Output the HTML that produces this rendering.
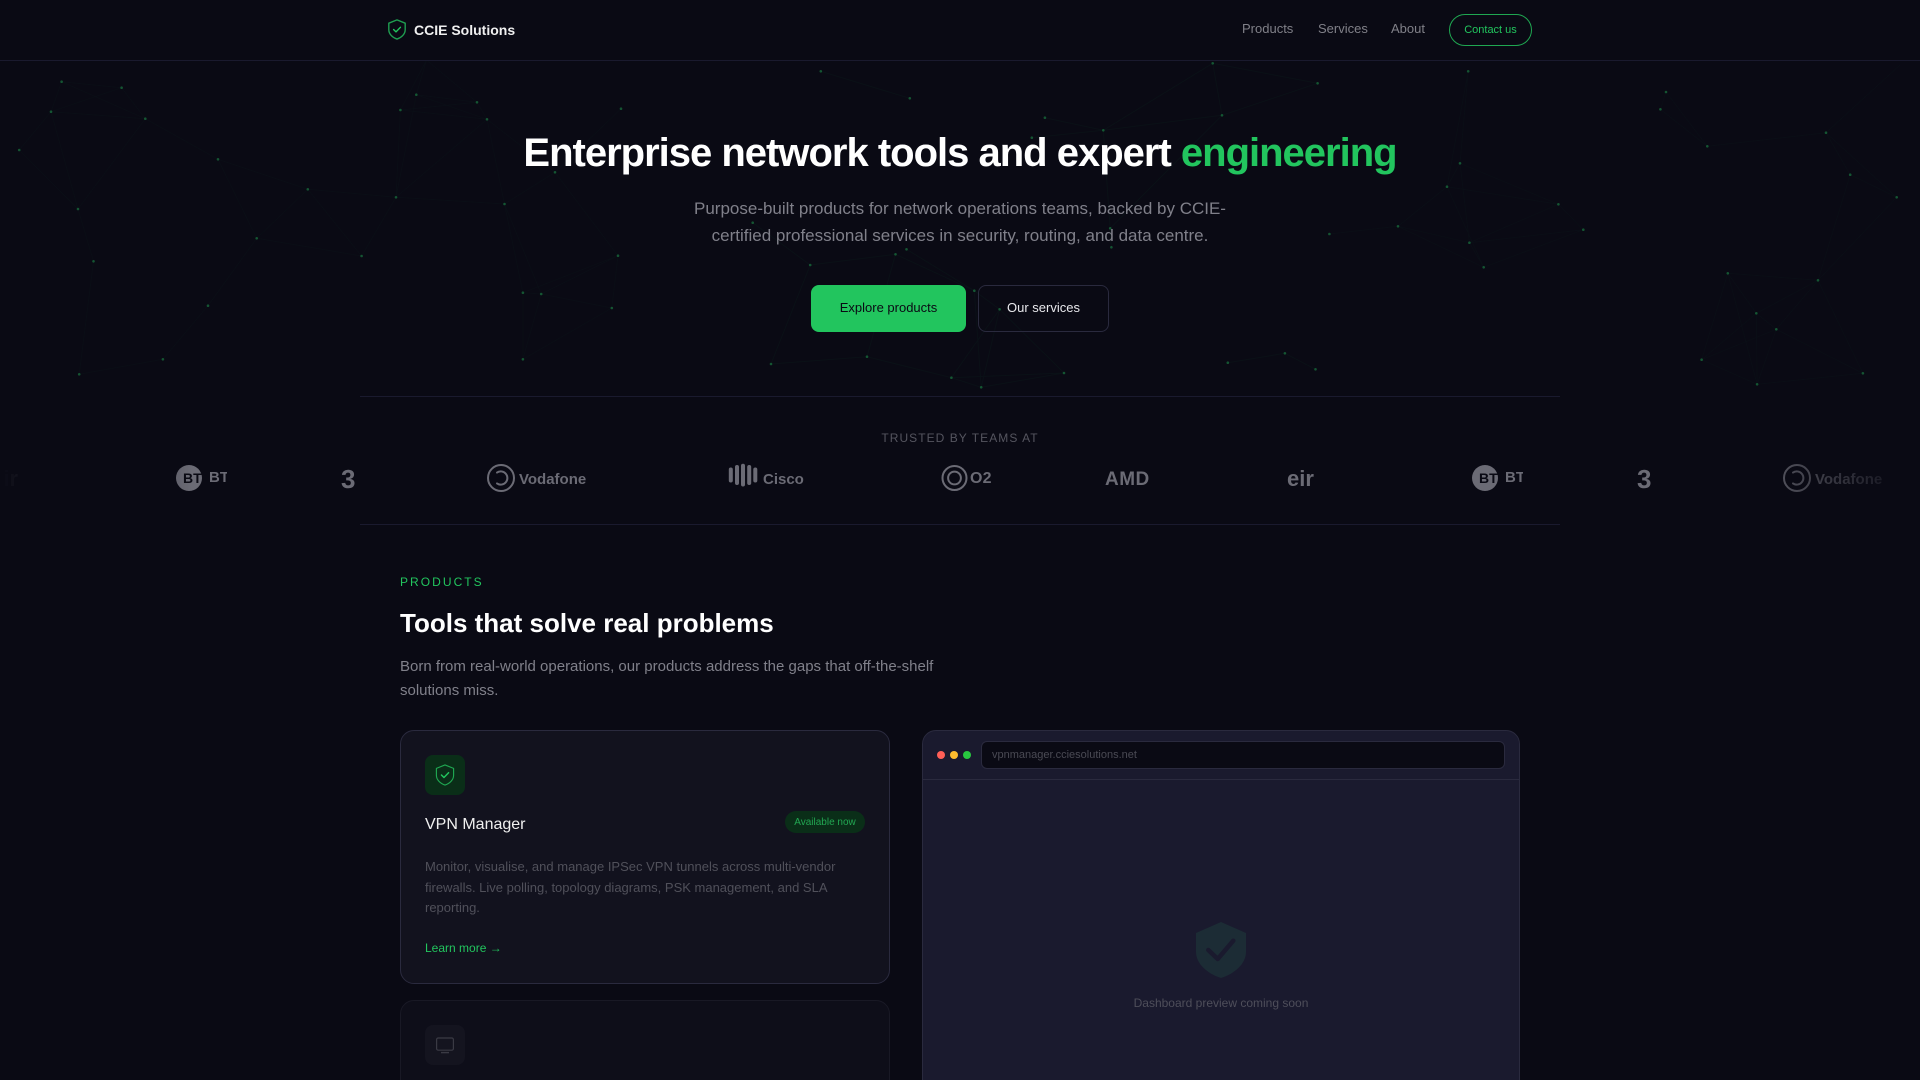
<!DOCTYPE html>
<html lang="en">
<head>
<meta charset="utf-8">
<title>CCIE Solutions</title>
<style>
html,body{margin:0;padding:0;width:1920px;height:1080px;overflow:hidden;background:#0a0a14}
body{position:relative;font-family:"Liberation Sans",sans-serif;color:#fff}
.a{position:absolute;white-space:nowrap}
#net{position:absolute;left:0;top:61px;width:1920px;height:340px}
.marq{position:absolute;left:0;top:450px;width:1920px;height:60px;
 -webkit-mask-image:linear-gradient(90deg,transparent 0,#000 192px,#000 1728px,transparent 1920px);
 mask-image:linear-gradient(90deg,transparent 0,#000 192px,#000 1728px,transparent 1920px)}
.lg{position:absolute;white-space:nowrap;color:#6b6b75;font-weight:700;line-height:20px}
.btc{position:absolute;width:26px;height:20px;overflow:hidden;color:#0a0a14;font-size:14px;font-weight:700;line-height:20px;padding-left:7px;box-sizing:border-box;white-space:nowrap}
.btt{position:absolute;width:18px;overflow:hidden;color:#6b6b75;font-size:15px;font-weight:700;line-height:20px;white-space:nowrap}
</style>
</head>
<body>
<svg id="net" viewBox="0 61 1920 340" xmlns="http://www.w3.org/2000/svg">
<path fill="none" stroke="#22c55e" stroke-opacity=".028" stroke-width="1" d="M61.6 81.7L121.6 87.7M61.6 81.7L145.3 118.7M61.6 81.7L51 111.7M121.6 87.7L51 111.7M51 111.7L145.3 118.7M121.6 87.7L145.3 118.7M51 111.7L19.2 150M145.3 118.7L218 159.3M51 111.7L78 209M145.3 118.7L78 209M19.2 150L78 209M78 209L93.5 261.3M93.5 261.3L79.2 374.3M79.2 374.3L162.9 359.3M162.9 359.3L208 305.7M208 305.7L256.7 238.3M218 159.3L307.8 189.3M218 159.3L256.7 238.3M307.8 189.3L256.7 238.3M307.8 189.3L361.6 256M256.7 238.3L361.6 256M307.8 189.3L396 197.3M396 197.3L361.6 256M396 197.3L504.5 204M396 197.3L400.4 110M396 197.3L416.3 94.7M396 197.3L487 119.3M416.3 94.7L477 102.3M416.3 94.7L487 119.3M400.4 110L477 102.3M400.4 110L487 119.3M477 102.3L487 119.3M426.5 60L416.3 94.7M426.5 60L477 102.3M426.5 60L400.4 110M487 119.3L504.5 204M487 119.3L555 172.3M504.5 204L555 172.3M555 172.3L618 255.7M504.5 204L522.9 292.7M504.5 204L541.2 294M522.9 292.7L541.2 294M541.2 294L618 255.7M522.9 292.7L618 255.7M541.2 294L611.8 308M618 255.7L611.8 308M522.9 292.7L522.9 359.3M541.2 294L522.9 359.3M611.8 308L522.9 359.3M621 108.7L555 172.3"/>
<path fill="none" stroke="#22c55e" stroke-opacity=".04" stroke-width="1" d="M820.8 71.3L909.8 98.3M1044.9 117.7L1103.3 130.3M1031.8 137.7L1103.3 130.3M1103.3 130.3L1222 115.3M1103.3 130.3L1212.7 63.3M1212.7 63.3L1222 115.3M1103.3 130.3L1110.2 228.3M1103.3 130.3L1111.4 247.3M1222 115.3L1110.2 228.3M1110.2 228.3L1111.4 247.3M752.7 222.7L810.2 265M895.5 254.3L810.2 265M906.5 249.3L974.3 290.7M895.5 254.3L974.3 290.7M974.3 290.7L999.6 309.3M810.2 265L771 364M771 364L867 356.7M867 356.7L951.4 377.7M951.4 377.7L981.2 387.3M951.4 377.7L1064 373M981.2 387.3L1064 373M999.6 309.3L951.4 377.7M999.6 309.3L981.2 387.3M974.3 290.7L981.2 387.3M895.5 254.3L867 356.7M1064 373L999.6 309.3M1227.8 362.7L1284.9 353.3M1284.9 353.3L1315.5 369.3M1222 115.3L1317.6 83.3M1212.7 63.3L1317.6 83.3"/>
<path fill="none" stroke="#22c55e" stroke-opacity=".028" stroke-width="1" d="M1468.2 71.3L1460 163.3M1468.2 71.3L1447 186.7M1460 163.3L1447 186.7M1460 163.3L1469.4 242.7M1460 163.3L1558.4 204.3M1447 186.7L1558.4 204.3M1447 186.7L1398 226.3M1447 186.7L1483.7 267.3M1398 226.3L1329.4 234M1398 226.3L1469.4 242.7M1398 226.3L1483.7 267.3M1469.4 242.7L1558.4 204.3M1469.4 242.7L1583.3 229.7M1469.4 242.7L1483.7 267.3M1483.7 267.3L1583.3 229.7M1558.4 204.3L1583.3 229.7M1666 92L1660.4 109.3M1666 92L1707.3 146.3M1660.4 109.3L1707.3 146.3M1707.3 146.3L1826 132.7M1826 132.7L1850.2 174.7M1826 132.7L1896.7 197.3M1850.2 174.7L1896.7 197.3M1850.2 174.7L1818 280.3M1896.7 197.3L1818 280.3M1826 132.7L1900 65M1727.8 273.3L1818 280.3M1727.8 273.3L1756.3 313.3M1727.8 273.3L1701.6 359.7M1727.8 273.3L1757.1 384.3M1818 280.3L1756.3 313.3M1818 280.3L1776.3 329.3M1818 280.3L1862.9 373.3M1756.3 313.3L1776.3 329.3M1756.3 313.3L1701.6 359.7M1756.3 313.3L1757.1 384.3M1776.3 329.3L1701.6 359.7M1776.3 329.3L1757.1 384.3M1776.3 329.3L1862.9 373.3M1701.6 359.7L1757.1 384.3M1757.1 384.3L1862.9 373.3"/>
<path fill="none" stroke="#1f9d50" stroke-opacity=".5" stroke-width="2.6" stroke-linecap="round" d="M61.6 81.7h.01M121.6 87.7h.01M51 111.7h.01M145.3 118.7h.01M19.2 150h.01M218 159.3h.01M307.8 189.3h.01M396 197.3h.01M78 209h.01M256.7 238.3h.01M361.6 256h.01M93.5 261.3h.01M208 305.7h.01M162.9 359.3h.01M79.2 374.3h.01M416.3 94.7h.01M477 102.3h.01M400.4 110h.01M487 119.3h.01M555 172.3h.01M504.5 204h.01M621 108.7h.01M618 255.7h.01M522.9 292.7h.01M541.2 294h.01M611.8 308h.01M522.9 359.3h.01M820.8 71.3h.01M909.8 98.3h.01M1044.9 117.7h.01M1103.3 130.3h.01M1031.8 137.7h.01M1212.7 63.3h.01M1222 115.3h.01M752.7 222.7h.01M1110.2 228.3h.01M1111.4 247.3h.01M895.5 254.3h.01M906.5 249.3h.01M810.2 265h.01M974.3 290.7h.01M999.6 309.3h.01M771 364h.01M867 356.7h.01M951.4 377.7h.01M981.2 387.3h.01M1064 373h.01M1227.8 362.7h.01M1317.6 83.3h.01M1468.2 71.3h.01M1460 163.3h.01M1447 186.7h.01M1558.4 204.3h.01M1398 226.3h.01M1329.4 234h.01M1583.3 229.7h.01M1469.4 242.7h.01M1483.7 267.3h.01M1284.9 353.3h.01M1315.5 369.3h.01M1666 92h.01M1660.4 109.3h.01M1707.3 146.3h.01M1826 132.7h.01M1850.2 174.7h.01M1896.7 197.3h.01M1727.8 273.3h.01M1818 280.3h.01M1756.3 313.3h.01M1776.3 329.3h.01M1701.6 359.7h.01M1862.9 373.3h.01M1757.1 384.3h.01"/>
</svg>

<!-- Nav -->
<div class="a" style="left:0;top:60px;width:1920px;height:1px;background:#1a1a2e"></div>
<svg class="a" style="left:387px;top:19px" width="20" height="21" viewBox="0 0 20 21" fill="none" stroke="#1f9d50" stroke-width="1.4" stroke-linejoin="round" stroke-linecap="round"><path d="M10 .9L18.2 4.2V10.8C18.2 15 14.6 18.6 10 20.1 5.4 18.6 1.8 15 1.8 10.8V4.2Z"/><path d="M6.6 10.5l2.4 2.4 4.4-4.6" stroke="#22c55e"/></svg>
<div class="a" style="left:414px;top:20px;font-size:14px;font-weight:700;line-height:20px;color:#f0f0f0">CCIE Solutions</div>
<div class="a" style="left:1242px;top:19px;font-size:13px;line-height:20px;color:#808088">Products</div>
<div class="a" style="left:1318px;top:19px;font-size:13px;line-height:20px;color:#808088">Services</div>
<div class="a" style="left:1391px;top:19px;font-size:13px;line-height:20px;color:#808088">About</div>
<div class="a" style="left:1449px;top:14px;width:83px;height:32px;box-sizing:border-box;border:1px solid #1fa751;border-radius:16px;font-size:11px;line-height:30px;text-align:center;color:#22c55e">Contact us</div>

<!-- Hero -->
<div class="a" style="left:0;width:1920px;top:127px;text-align:center;font-size:40px;font-weight:700;letter-spacing:-1px;line-height:52px;color:#fff">Enterprise network tools and expert <span style="color:#22c55e">engineering</span></div>
<div class="a" style="left:0;width:1920px;top:195px;text-align:center;font-size:17px;line-height:27px;color:#80808a">Purpose-built products for network operations teams, backed by CCIE-<br>certified professional services in security, routing, and data centre.</div>
<div class="a" style="left:811px;top:285px;width:155px;height:47px;border-radius:8px;background:#22c55e;color:#0a0a14;font-size:13px;line-height:46px;text-align:center">Explore products</div>
<div class="a" style="left:978px;top:285px;width:131px;height:47px;box-sizing:border-box;border:1px solid #2a2a3e;border-radius:8px;color:#e8e8ec;font-size:13px;line-height:44px;text-align:center">Our services</div>

<div class="a" style="left:360px;top:396px;width:1200px;height:1px;background:#1a1a2e"></div>
<div class="a" style="left:360px;top:524px;width:1200px;height:1px;background:#1a1a2e"></div>

<!-- Trusted -->
<div class="a" style="left:0;width:1920px;top:430px;text-align:center;font-size:12px;line-height:16px;letter-spacing:1.05px;color:#55555f">TRUSTED BY TEAMS AT</div>
<div class="marq">
 <div class="lg" style="left:-9px;top:18px;font-size:22px;line-height:22px">eir</div>
 <svg class="a" style="left:176px;top:15px" width="26" height="26"><circle cx="13" cy="13" r="13" fill="#6b6b75"/></svg>
 <div class="btc" style="left:176px;top:18px">BT</div>
 <div class="btt" style="left:209px;top:18px">BT</div>
 <div class="lg" style="left:341px;top:14px;font-size:26px;line-height:30px">3</div>
 <svg class="a" style="left:487px;top:14px" width="28" height="28" fill="none" stroke="#6b6b75" stroke-width="2"><circle cx="14" cy="14" r="13"/><path d="M10 8.6A6.6 6.6 0 1 1 10 19.4" stroke-linecap="round"/></svg>
 <div class="lg" style="left:519px;top:20px;font-size:15px">Vodafone</div>
 <svg class="a" style="left:728px;top:13px" width="30" height="24" stroke="#6b6b75" stroke-width="4" stroke-linecap="round"><path d="M2.8 6.5V17.5M9 4V20M15 2.8V21.5M21.2 4V20M27.3 6.5V17.5"/></svg>
 <div class="lg" style="left:763px;top:20px;font-size:15px">Cisco</div>
 <svg class="a" style="left:941px;top:15px" width="27" height="26" fill="none" stroke="#6b6b75" stroke-width="2"><circle cx="13.5" cy="13" r="12"/><circle cx="13.5" cy="13" r="6.4"/></svg>
 <div class="lg" style="left:970px;top:19px;font-size:16px;letter-spacing:.2px">O2</div>
 <div class="lg" style="left:1105px;top:20px;font-size:19px;letter-spacing:.5px">AMD</div>
 <div class="lg" style="left:1287px;top:18px;font-size:22px;line-height:22px">eir</div>
 <svg class="a" style="left:1472px;top:15px" width="26" height="26"><circle cx="13" cy="13" r="13" fill="#6b6b75"/></svg>
 <div class="btc" style="left:1472px;top:18px">BT</div>
 <div class="btt" style="left:1505px;top:18px">BT</div>
 <div class="lg" style="left:1637px;top:14px;font-size:26px;line-height:30px">3</div>
 <svg class="a" style="left:1783px;top:14px" width="28" height="28" fill="none" stroke="#6b6b75" stroke-width="2"><circle cx="14" cy="14" r="13"/><path d="M10 8.6A6.6 6.6 0 1 1 10 19.4" stroke-linecap="round"/></svg>
 <div class="lg" style="left:1815px;top:20px;font-size:15px">Vodafone</div>
</div>

<!-- Products -->
<div class="a" style="left:400px;top:574px;font-size:12px;line-height:16px;letter-spacing:2.05px;color:#22c55e">PRODUCTS</div>
<div class="a" style="left:400px;top:606px;font-size:26px;font-weight:700;line-height:34px;color:#fff">Tools that solve real problems</div>
<div class="a" style="left:400px;top:655px;font-size:15px;line-height:24px;color:#80808a">Born from real-world operations, our products address the gaps that off-the-shelf<br>solutions miss.</div>

<!-- Card 1 -->
<div class="a" style="left:400px;top:730px;width:490px;height:254px;box-sizing:border-box;border:1px solid #2a2a3e;border-radius:14px;background:#12121e"></div>
<div class="a" style="left:425px;top:755px;width:40px;height:40px;border-radius:8px;background:#0a2e18"></div>
<svg class="a" style="left:434px;top:764px" width="22" height="22" viewBox="0 0 20 21" fill="none" stroke="#22c55e" stroke-width="1.1" stroke-linejoin="round" stroke-linecap="round"><path d="M10 .9L18.2 4.2V10.8C18.2 15 14.6 18.6 10 20.1 5.4 18.6 1.8 15 1.8 10.8V4.2Z" stroke="#1fa751"/><path d="M6.6 10.5l2.4 2.4 4.4-4.6" stroke-width="1.4"/></svg>
<div class="a" style="left:425px;top:814px;font-size:16px;line-height:22px;color:#f0f0f0">VPN Manager</div>
<div class="a" style="left:785px;top:811px;width:80px;height:22px;border-radius:11px;background:#0a2e18;color:#22a752;font-size:10px;line-height:23px;text-align:center">Available now</div>
<div class="a" style="left:425px;top:857px;font-size:13px;line-height:20.5px;color:#50505a">Monitor, visualise, and manage IPSec VPN tunnels across multi-vendor<br>firewalls. Live polling, topology diagrams, PSK management, and SLA<br>reporting.</div>
<div class="a" style="left:425px;top:939px;font-size:12px;line-height:18px;color:#22c55e">Learn more →</div>

<!-- Card 2 -->
<div class="a" style="left:400px;top:1000px;width:490px;height:200px;box-sizing:border-box;border:1px solid #191925;border-radius:14px;background:#0e0e19"></div>
<div class="a" style="left:425px;top:1025px;width:40px;height:40px;border-radius:8px;background:#14141f"></div>
<svg class="a" style="left:435px;top:1036px" width="20" height="20" fill="none" stroke="#3a3a44" stroke-width="1.2"><rect x="1.6" y="2" width="16.8" height="12.2" rx="1.6"/><path d="M6 16.6h8" stroke-width="1.4"/></svg>

<!-- Browser -->
<div class="a" style="left:922px;top:730px;width:598px;height:420px;box-sizing:border-box;border:1px solid #2a2a3e;border-radius:14px;background:#1a1a2e"></div>
<div class="a" style="left:923px;top:779px;width:596px;height:1px;background:#2a2a3e"></div>
<div class="a" style="left:937px;top:751px;width:8px;height:8px;border-radius:50%;background:#ff5f57"></div>
<div class="a" style="left:950px;top:751px;width:8px;height:8px;border-radius:50%;background:#febc2e"></div>
<div class="a" style="left:963px;top:751px;width:8px;height:8px;border-radius:50%;background:#28c840"></div>
<div class="a" style="left:981px;top:741px;width:524px;height:28px;box-sizing:border-box;border:1px solid #2a2a3e;border-radius:6px;background:#0a0a14;color:#4a4a54;font-size:11px;line-height:27px;padding-left:10px">vpnmanager.cciesolutions.net</div>
<svg class="a" style="left:1195px;top:922px" width="52" height="56" viewBox="0 0 50 56"><path d="M25 0L50 11V30C50 42 38 52 25 56 12 52 0 42 0 30V11Z" fill="#1c2c35"/><path d="M12.3 28L21.7 37 37.3 18.7" fill="none" stroke="#1a1a2e" stroke-width="4.5" stroke-linecap="round" stroke-linejoin="round"/></svg>
<div class="a" style="left:922px;top:995px;width:598px;text-align:center;font-size:12px;line-height:16px;color:#4e4e5a">Dashboard preview coming soon</div>
</body>
</html>
